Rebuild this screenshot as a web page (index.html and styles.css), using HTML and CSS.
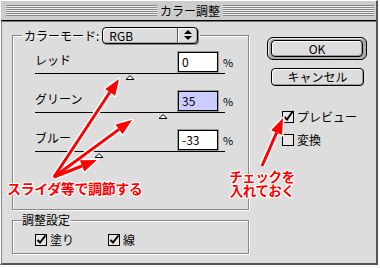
FILE: index.html
```html
<!DOCTYPE html>
<html lang="ja">
<head>
  <meta charset="UTF-8" />
  <title>カラー調整</title>
  <link rel="stylesheet" href="styles.css">
</head>
<body>

  <div class="window">
    <div class="titlebar">
      <span class="stripes"></span>
      <span class="title">カラー調整</span>
      <span class="stripes"></span>
    </div>

    <div class="content">
      <div class="left">
        <fieldset class="group">
          <legend class="mode-legend">
            <span>カラーモード:</span>
            <span class="popup">
              <span class="popup-value">RGB</span>
              <span class="popup-arrow">
                <svg width="8" height="11" viewBox="0 0 8 11"><polygon points="4,0 8,4 0,4" /><polygon points="0,6 8,6 4,10" /></svg>
              </span>
            </span>
          </legend>

          <div class="sliders">
            <div class="slider">
              <div class="slider-row">
                <span class="slider-label">レッド</span>
                <span class="field">0</span>
                <span class="unit">%</span>
              </div>
              <div class="track"><span class="thumb" style="left: 50%"></span></div>
            </div>
            <div class="slider">
              <div class="slider-row">
                <span class="slider-label">グリーン</span>
                <span class="field selected">35</span>
                <span class="unit">%</span>
              </div>
              <div class="track"><span class="thumb" style="left: 67.5%"></span></div>
            </div>
            <div class="slider">
              <div class="slider-row">
                <span class="slider-label">ブルー</span>
                <span class="field">-33</span>
                <span class="unit">%</span>
              </div>
              <div class="track"><span class="thumb" style="left: 33.5%"></span></div>
            </div>
          </div>
        </fieldset>

        <fieldset class="group apply">
          <legend class="apply-legend">調整設定</legend>
          <div class="checks">
            <span class="check">
              <svg class="box" width="12" height="12" viewBox="0 0 12 12"><rect x="0.5" y="0.5" width="11" height="11" /><path d="M2.5 6 L5 8.5 L10.5 1.5" /></svg>
              塗り
            </span>
            <span class="check">
              <svg class="box" width="12" height="12" viewBox="0 0 12 12"><rect x="0.5" y="0.5" width="11" height="11" /><path d="M2.5 6 L5 8.5 L10.5 1.5" /></svg>
              線
            </span>
          </div>
        </fieldset>
      </div>

      <div class="right">
        <div class="default-ring"><span class="btn">OK</span></div>
        <span class="btn cancel">キャンセル</span>
        <span class="check preview">
          <svg class="box" width="12" height="12" viewBox="0 0 12 12"><rect x="0.5" y="0.5" width="11" height="11" /><path d="M2.5 6 L5 8.5 L11 0" /></svg>
          プレビュー
        </span>
        <span class="check convert">
          <svg class="box" width="12" height="12" viewBox="0 0 12 12"><rect x="0.5" y="0.5" width="11" height="11" /></svg>
          変換
        </span>
      </div>
    </div>

    <!-- annotations drawn over the dialog -->
    <svg class="arrows" width="380" height="268" viewBox="0 0 380 268">
      <g class="halo">
        <line x1="54" y1="177" x2="110" y2="92" />
        <polygon points="119,79 115.2,95.7 105.2,89" />
        <line x1="54" y1="177" x2="119" y2="129.4" />
        <polygon points="132,120 122.6,134.3 115.5,124.6" />
        <line x1="54" y1="177" x2="82" y2="166" />
        <polygon points="97,160 84.3,171.5 79.9,160.3" />
        <line x1="262" y1="166" x2="276.6" y2="132.7" />
        <polygon points="283,118 282.1,135.1 271.1,130.3" />
      </g>
      <g class="red">
        <line x1="54" y1="177" x2="110" y2="92" />
        <polygon points="119,79 115.2,95.7 105.2,89" />
        <line x1="54" y1="177" x2="119" y2="129.4" />
        <polygon points="132,120 122.6,134.3 115.5,124.6" />
        <line x1="54" y1="177" x2="82" y2="166" />
        <polygon points="97,160 84.3,171.5 79.9,160.3" />
        <line x1="262" y1="166" x2="276.6" y2="132.7" />
        <polygon points="283,118 282.1,135.1 271.1,130.3" />
      </g>
    </svg>
    <div class="note note-slider">スライダ等で調節する</div>
    <div class="note note-check">チェックを<br>入れておく</div>
  </div>

</body>
</html>
```

FILE: styles.css
```css
body {
  margin: 0;
  background: #fff;
  font-family: "Noto Sans CJK JP", "DejaVu Sans", sans-serif;
  font-size: 12px;
  color: #000;
}

.window {
  position: relative;
  width: 375px;
  height: 262px;
  background: #ddd;
  border-top: 1px solid #fff;
  border-left: 1px solid #fff;
  border-right: 2px solid #555;
  border-bottom: 2px solid #555;
}

.titlebar {
  display: flex;
  align-items: center;
  height: 19px;
  padding: 0 2px 0 5px;
  background: #ccc;
  border-bottom: 1px solid #000;
}

.stripes {
  flex: 1;
  height: 11px;
  background: repeating-linear-gradient(#888 0 1px, #eee 1px 2px);
}

.title {
  padding: 0 3px;
  line-height: 19px;
}

.content {
  display: flex;
  align-items: flex-start;
  height: 241px;
  padding: 5px 0 0 10px;
  border-top: 1px solid #777;
  border-left: 1px solid #888;
}

.left {
  width: 237px;
}

.group {
  box-sizing: border-box;
  width: 237px;
  margin: 0;
  padding: 0;
  border: 1px solid #888;
  box-shadow: 1px 1px 0 #fff, inset 1px 1px 0 #fff;
}

.mode-legend {
  display: flex;
  align-items: center;
  gap: 3px;
  margin-left: 9px;
  padding: 0 2px;
  height: 17px;
}

.popup {
  display: flex;
  box-sizing: border-box;
  width: 96px;
  height: 17px;
  border: 1px solid #000;
  border-radius: 4px;
  background: #ddd;
  box-shadow: 1px 1px 0 #888, inset 1px 1px 0 #fff, inset -1px -1px 0 #aaa;
}

.popup-value {
  flex: 1;
  padding-left: 6px;
  line-height: 15px;
}

.popup-arrow {
  display: flex;
  align-items: center;
  justify-content: center;
  width: 19px;
  border-left: 1px solid #555;
  box-shadow: inset 1px 0 0 #fff;
}

.sliders {
  padding: 8px 0 57px 22px;
}

.slider + .slider {
  margin-top: 17px;
}

.slider-row {
  display: flex;
  align-items: flex-start;
  height: 20px;
}

.slider-label {
  width: 143px;
  line-height: 16px;
}

.field {
  box-sizing: border-box;
  width: 40px;
  height: 20px;
  padding-left: 3px;
  border: 1px solid #000;
  outline: 1px solid #999;
  background: #fff;
  line-height: 18px;
}

.field.selected {
  background: #ccf;
}

.unit {
  margin-left: 5px;
  font-size: 11px;
  line-height: 20px;
}

.track {
  position: relative;
  width: 190px;
  height: 1px;
  margin-top: 1px;
  background: #000;
}

.thumb {
  position: absolute;
  top: 2px;
  width: 9px;
  height: 5px;
  transform: translateX(-50%);
  background: url("data:image/svg+xml,%3Csvg xmlns='http://www.w3.org/2000/svg' width='9' height='5'%3E%3Cpolygon points='4.5,0.5 8.5,4.5 0.5,4.5' fill='%23fff' stroke='%23000'/%3E%3C/svg%3E");
}

.apply {
  margin-top: 3px;
}

.apply-legend {
  margin-left: 9px;
  padding: 0 1px 0 0;
  line-height: 14px;
}

.checks {
  display: flex;
  gap: 0;
  padding: 6px 0 6px 22px;
}

.checks .check {
  width: 73px;
}

.check {
  display: flex;
  align-items: center;
  gap: 3px;
  line-height: 14px;
}

.box rect {
  fill: #e6e6e6;
  stroke: #000;
}

.box path {
  fill: none;
  stroke: #000;
  stroke-width: 2;
}

.box {
  overflow: visible;
}

.right {
  display: flex;
  flex-direction: column;
  align-items: flex-start;
  margin: 10px 0 0 18px;
}

.default-ring {
  box-sizing: border-box;
  width: 100px;
  height: 23px;
  padding: 2px 3px;
  border: 1px solid #000;
  border-radius: 6px;
  background: #aaa;
  box-shadow: inset 1px 1px 0 #eee;
}

.btn {
  display: block;
  box-sizing: border-box;
  width: 92px;
  height: 17px;
  border: 1px solid #000;
  border-radius: 4px;
  background: #ddd;
  box-shadow: inset 1px 1px 0 #fff, inset -1px -1px 0 #999;
  text-align: center;
  line-height: 15px;
}

.cancel {
  width: 93px;
  height: 18px;
  margin: 8px 0 0 4px;
  line-height: 16px;
}

.preview {
  margin: 24px 0 0 15px;
}

.convert {
  margin: 9px 0 0 15px;
}

.arrows {
  position: absolute;
  top: -1px;
  left: -1px;
  pointer-events: none;
}

.halo line {
  stroke: #fff;
  stroke-width: 6;
}

.halo polygon {
  fill: #fff;
  stroke: #fff;
  stroke-width: 3;
  stroke-linejoin: round;
}

.red line {
  stroke: #f00;
  stroke-width: 3;
}

.red polygon {
  fill: #f00;
}

.note {
  position: absolute;
  color: #f00;
  font-weight: bold;
  font-size: 14px;
  letter-spacing: -0.4px;
  text-shadow: 1px 0 #fff, -1px 0 #fff, 0 1px #fff, 0 -1px #fff,
    1px 1px #fff, -1px -1px #fff, 1px -1px #fff, -1px 1px #fff;
}

.note-slider {
  top: 179px;
  left: 6px;
  line-height: 16px;
}

.note-check {
  top: 168px;
  left: 227px;
  width: 68px;
  font-size: 13.5px;
  line-height: 14px;
  text-align: center;
}
```
